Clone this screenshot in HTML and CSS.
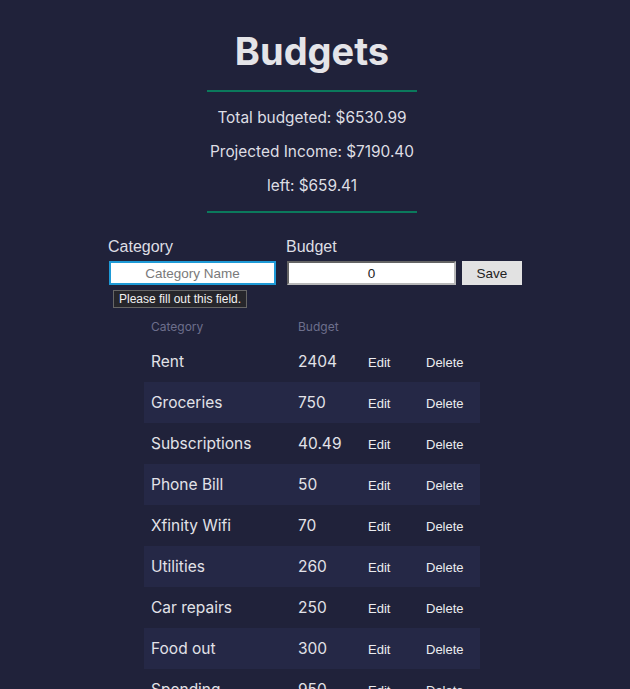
FILE: index.html
```html
<!DOCTYPE html>
<html>
<head>
<meta charset="utf-8">
<link rel="stylesheet" href="styles.css">
</head>
<body>
<main class="page">
  <header class="summary">
    <h1 class="title">Budgets</h1>
    <hr class="rule">
    <p class="stat">Total budgeted: $6530.99</p>
    <p class="stat">Projected Income: $7190.40</p>
    <p class="stat">left: $659.41</p>
    <hr class="rule">
  </header>

  <form class="entry">
    <label class="field">
      <span class="field-label">Category</span>
      <input class="field-input focused" type="text" placeholder="Category Name">
      <span class="tooltip">Please fill out this field.</span>
    </label>
    <label class="field">
      <span class="field-label">Budget</span>
      <input class="field-input" type="text" value="0">
    </label>
    <button class="save" type="button">Save</button>
  </form>

  <table class="budget-table">
    <colgroup>
      <col class="c-cat"><col class="c-amt"><col class="c-edit"><col class="c-del">
    </colgroup>
    <thead>
      <tr><th>Category</th><th>Budget</th><th></th><th></th></tr>
    </thead>
    <tbody>
      <tr><td>Rent</td><td>2404</td><td><button class="act">Edit</button></td><td><button class="act">Delete</button></td></tr>
      <tr><td>Groceries</td><td>750</td><td><button class="act">Edit</button></td><td><button class="act">Delete</button></td></tr>
      <tr><td>Subscriptions</td><td>40.49</td><td><button class="act">Edit</button></td><td><button class="act">Delete</button></td></tr>
      <tr><td>Phone Bill</td><td>50</td><td><button class="act">Edit</button></td><td><button class="act">Delete</button></td></tr>
      <tr><td>Xfinity Wifi</td><td>70</td><td><button class="act">Edit</button></td><td><button class="act">Delete</button></td></tr>
      <tr><td>Utilities</td><td>260</td><td><button class="act">Edit</button></td><td><button class="act">Delete</button></td></tr>
      <tr><td>Car repairs</td><td>250</td><td><button class="act">Edit</button></td><td><button class="act">Delete</button></td></tr>
      <tr><td>Food out</td><td>300</td><td><button class="act">Edit</button></td><td><button class="act">Delete</button></td></tr>
      <tr><td>Spending</td><td>950</td><td><button class="act">Edit</button></td><td><button class="act">Delete</button></td></tr>
      <tr><td>Savings</td><td>1200</td><td><button class="act">Edit</button></td><td><button class="act">Delete</button></td></tr>
    </tbody>
  </table>
</main>
</body>
</html>
```
FILE: styles.css
```css
html, body {
  margin: 0;
  padding: 0;
  background: #20223a;
}
body {
  font-family: Inter, "Noto Sans", sans-serif;
  color: #dedee4;
}
.page {
  width: 630px;
  display: flex;
  flex-direction: column;
  align-items: center;
}
.summary {
  display: flex;
  flex-direction: column;
  align-items: center;
  margin-right: 6px;
}
.title {
  font-size: 38px;
  font-weight: 700;
  color: #e4e4e8;
  margin: 28px 0 0;
  line-height: 47px;
}
.rule {
  width: 210px;
  border: 0;
  height: 2px;
  background: #0b7a5c;
  margin: 15px 0 0;
}
.stat {
  font-size: 15.4px;
  line-height: 19px;
  margin: 15px 0 0;
}
.rule + .stat { margin-top: 16px; }
.stat + .rule { margin-top: 16px; }

.entry {
  display: flex;
  align-items: flex-end;
  margin-top: 25px;
  font-family: "Liberation Sans", Arial, sans-serif;
}
.field {
  position: relative;
  display: flex;
  flex-direction: column;
  margin-right: 10px;
}
.field + .field { margin-right: 6px; }
.field-label {
  font-size: 16px;
  line-height: 18px;
  color: #dedee4;
  margin-bottom: 5px;
}
.field-input {
  box-sizing: border-box;
  width: 169px;
  height: 24px;
  margin: 0 0 0 1px;
  border: 2px inset #b8b8b8;
  background: #fff;
  text-align: center;
  font-family: "Liberation Sans", Arial, sans-serif;
  font-size: 13.5px;
  color: #222;
  padding: 0 4px;
  outline: none;
}
.field-input::placeholder { color: #7a7a7a; }
.focused {
  width: 167px;
  border: 2px solid #1e9ad6;
}
.tooltip {
  position: absolute;
  left: 5px;
  top: 52px;
  background: #26262b;
  border: 1px solid #666;
  color: #f2f2f2;
  font-size: 12px;
  line-height: 16px;
  padding: 0 5px;
  white-space: nowrap;
}
.save {
  box-sizing: border-box;
  width: 60px;
  height: 24px;
  border: 0;
  background: #e2e2e2;
  color: #222;
  font-family: "Liberation Sans", Arial, sans-serif;
  font-size: 13.5px;
  padding: 0;
}

.budget-table {
  margin-top: 26px;
  margin-right: 6px;
  border-collapse: collapse;
  width: 336px;
  table-layout: fixed;
}
.c-cat { width: 147px; }
.c-amt { width: 69px; }
.c-edit { width: 58px; }
.c-del { width: 62px; }
.budget-table th {
  text-align: left;
  font-weight: 400;
  font-size: 12px;
  color: #6d6f8c;
  padding: 0 7px;
  height: 30px;
  vertical-align: middle;
}
.budget-table td {
  height: 41px;
  padding: 0 7px;
  font-size: 15.5px;
  color: #e2e2e8;
  vertical-align: middle;
}
.budget-table tbody tr:nth-child(even) { background: #252846; }
.act {
  background: transparent;
  border: 0;
  color: #ececf0;
  font-family: "Liberation Sans", Arial, sans-serif;
  font-size: 13px;
  padding: 0 1px;
  margin-top: -2px;
}
```
